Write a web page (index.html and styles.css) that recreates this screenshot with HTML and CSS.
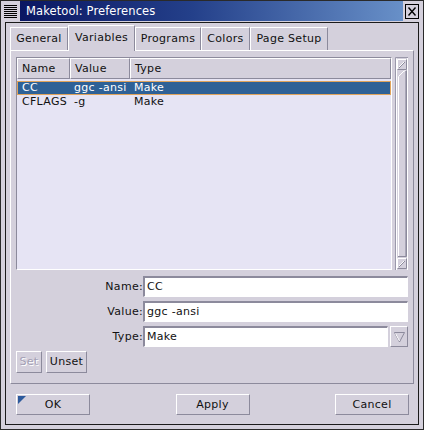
FILE: index.html
```html
<!DOCTYPE html>
<html>
<head>
<meta charset="utf-8">
<link rel="stylesheet" href="styles.css">
</head>
<body>
<div class="win">
  <div class="titlebar">
    <div class="menu-btn">
      <svg width="15" height="15" viewBox="0 0 15 15">
        <rect x="0" y="0" width="15" height="15" fill="#d4d0dc"/>
        <path d="M1 1.5H14M1 3.5H14M1 5.5H14M1 7.5H14M1 9.5H14M1 11.5H14M1 13.5H14" stroke="#000" stroke-width="1"/>
      </svg>
    </div>
    <div class="title">Maketool: Preferences</div>
    <div class="close-btn">
      <svg width="14" height="15" viewBox="0 0 14 15">
        <rect x="0.5" y="0.5" width="13" height="14" fill="#d4d0dc" stroke="#000"/>
        <path d="M3.5 3.5L10.5 11.5M10.5 3.5L3.5 11.5" stroke="#000" stroke-width="1.4"/>
      </svg>
    </div>
  </div>
  <div class="client">
    <div class="tabs">
      <div class="tab t1">General</div>
      <div class="tab t2 active">Variables</div>
      <div class="tab t3">Programs</div>
      <div class="tab t4">Colors</div>
      <div class="tab t5">Page Setup</div>
    </div>
    <div class="panel">
      <div class="listwrap">
        <div class="list">
          <div class="hdr">
            <div class="hc c1">Name</div>
            <div class="hc c2">Value</div>
            <div class="hc c3">Type</div>
          </div>
          <div class="row sel">
            <div class="rc c1">CC</div>
            <div class="rc c2">ggc -ansi</div>
            <div class="rc c3">Make</div>
          </div>
          <div class="row">
            <div class="rc c1">CFLAGS</div>
            <div class="rc c2">-g</div>
            <div class="rc c3">Make</div>
          </div>
        </div>
        <div class="vscroll">
          <svg width="13" height="213" viewBox="0 0 13 213">
            <rect x="0" y="0" width="13" height="213" fill="#d4d0dc"/>
            <path d="M0.5 213V0.5H13" stroke="#9a98aa"/>
            <path d="M1.5 213V1.5" stroke="#ffffff"/>
            <path d="M12.5 1V213" stroke="#ffffff"/>
            <path d="M2.5 12.5V2.5H11.5" stroke="#ffffff"/>
            <path d="M2.5 12.5H11.5V2.5" stroke="#8c8a9c"/>
            <path d="M4 11L10 5" stroke="#8c8a9c"/>
            <path d="M4 10L9 5" stroke="#ffffff"/>
            <path d="M3.5 199V19.5L9 14H11" stroke="#ffffff"/>
            <path d="M11.5 13.5V199.5H3" stroke="#8c8a9c"/>
            <path d="M10.5 14V199" stroke="#a8a6b6"/>
            <path d="M2.5 211.5V201.5H11.5" stroke="#ffffff"/>
            <path d="M2.5 211.5H11.5V201.5" stroke="#8c8a9c"/>
            <path d="M4 210L10 204" stroke="#8c8a9c"/>
            <path d="M4 209L9 204" stroke="#ffffff"/>
          </svg>
        </div>
      </div>
      <div class="form">
        <div class="lbl">Name:</div>
        <div class="entry">CC</div>
        <div class="lbl">Value:</div>
        <div class="entry">ggc -ansi</div>
        <div class="lbl">Type:</div>
        <div class="combo">
          <div class="entry">Make</div>
          <div class="combo-btn">
            <svg width="13" height="13" viewBox="0 0 13 13">
              <path d="M1.5 2.5H11.5L6.5 12Z" stroke="#8c8a9c"/>
              <path d="M2.5 3.5L6.5 11" stroke="#ffffff"/>
            </svg>
          </div>
        </div>
      </div>
      <div class="setrow">
        <div class="btn small disabled set">Set</div>
        <div class="btn small unset">Unset</div>
      </div>
    </div>
    <div class="actions">
      <div class="btn big default">OK</div>
      <div class="btn big">Apply</div>
      <div class="btn big">Cancel</div>
    </div>
  </div>
</div>
</body>
</html>
```
FILE: styles.css
```css
* { box-sizing: border-box; }
html, body { margin: 0; padding: 0; }
body {
  background: #d4d0dc;
  font-family: "DejaVu Sans", "Liberation Sans", sans-serif;
  font-size: 11px;
  letter-spacing: 0.3px;
  color: #111;
}
svg path { fill: none; }
.win {
  width: 424px;
  height: 430px;
  border: 1px solid #2a2a2a;
  background: #d4d0dc;
  display: flex;
  flex-direction: column;
}
.titlebar {
  display: flex;
  align-items: center;
  height: 20px;
  margin: 0 4px 0 2px;
  gap: 2px;
}
.menu-btn, .close-btn { display: flex; }
.menu-btn svg, .close-btn svg { display: block; }
.title {
  flex: 1;
  height: 20px;
  background: linear-gradient(to right, #0a1662 0%, #24408a 45%, #6890c8 100%);
  color: #fff;
  padding-left: 6px;
  line-height: 20px;
  font-size: 11.5px;
  letter-spacing: 0.1px;
}
.client {
  flex: 1;
  margin: 1px 4px 4px 4px;
  border: 1px solid #1a1a1a;
  padding: 2px 4px 0 4px;
  display: flex;
  flex-direction: column;
}
.tabs {
  display: flex;
  align-items: flex-end;
  height: 25px;
}
.tab {
  height: 23px;
  padding: 0;
  border: 1px solid;
  border-color: #fff #8c8a9c transparent #fff;
  border-bottom: none;
  line-height: 21px;
  white-space: nowrap;
  text-align: center;
}
.t1 { width: 58px; }
.t2 { width: 67px; }
.t3 { width: 66px; }
.t4 { width: 49px; }
.t5 { width: 78px; }
.tab.active {
  height: 26px;
  margin-bottom: -1px;
  background: #d4d0dc;
  position: relative;
  z-index: 1;
  line-height: 23px;
}
.panel {
  height: 334px;
  border: 1px solid;
  border-color: #fff #8c8a9c #8c8a9c #fff;
  padding: 6px 5px 0 5px;
}
.listwrap {
  display: flex;
  height: 213px;
  gap: 3px;
}
.list {
  flex: 1;
  border: 1px solid;
  border-color: #8c8a9c #fff #fff #8c8a9c;
  background: #e6e4f4;
}
.vscroll { width: 13px; }
.vscroll svg { display: block; }
.hdr {
  display: flex;
  height: 21px;
  background: #d4d0dc;
}
.hc {
  border: 1px solid;
  border-color: #fff #8c8a9c #8c8a9c #fff;
  padding-left: 4px;
  line-height: 19px;
}
.c1 { width: 53px; flex: none; }
.c2 { width: 60px; flex: none; }
.c3 { flex: 1; }
.row {
  display: flex;
  height: 14px;
  border: 1px solid transparent;
  line-height: 12px;
}
.row .rc { padding-left: 4px; white-space: nowrap; }
.row .c1 { width: 52px; }
.row.sel {
  margin-top: 2px;
  background: #2e6196;
  border-color: #e0a45c;
  color: #fff;
}
.form {
  display: grid;
  grid-template-columns: 127px 1fr;
  grid-auto-rows: 21px;
  row-gap: 4px;
  margin-top: 6px;
}
.lbl {
  text-align: right;
  line-height: 21px;
}
.entry {
  background: #fff;
  border-top: 2px solid #8c8a9c;
  border-left: 2px solid #8c8a9c;
  border-right: 1px solid #fff;
  border-bottom: 1px solid #fff;
  padding-left: 2px;
  line-height: 18px;
}
.combo {
  display: flex;
  gap: 2px;
}
.combo .entry { flex: 1; }
.combo-btn {
  width: 18px;
  border: 1px solid;
  border-color: #fff #8c8a9c #8c8a9c #fff;
  display: flex;
  align-items: center;
  justify-content: center;
}
.btn {
  border: 1px solid;
  border-color: #fff #8c8a9c #8c8a9c #fff;
  background: #d4d0dc;
  text-align: center;
}
.setrow {
  display: flex;
  gap: 4px;
  margin-top: 4px;
}
.btn.small { height: 22px; line-height: 20px; }
.btn.set { width: 26px; }
.btn.unset { width: 41px; }
.btn.disabled {
  color: #a4a0b4;
  text-shadow: 1px 1px 0 #fff;
}
.actions {
  display: flex;
  justify-content: space-between;
  margin-top: 10px;
  padding: 0 5px 0 6px;
}
.btn.big {
  width: 74px;
  height: 21px;
  line-height: 19px;
}
.btn.default { position: relative; }
.btn.default::before {
  content: "";
  position: absolute;
  left: 1px;
  top: 1px;
  width: 0;
  height: 0;
  border-top: 8px solid #2d5a9c;
  border-right: 8px solid transparent;
}
```
